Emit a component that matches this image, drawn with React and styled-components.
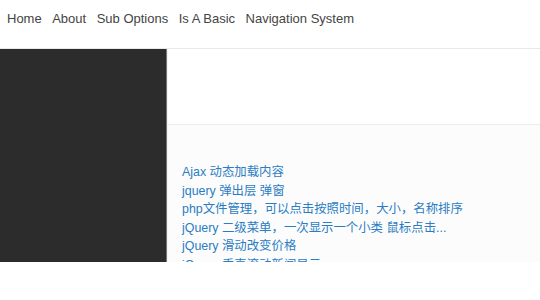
import React from "react";
import styled, { createGlobalStyle } from "styled-components";

const Global = createGlobalStyle`
  html, body { margin: 0; padding: 0; background: #fff; }
  body { font-family: "Liberation Sans", Arial, "Noto Sans CJK SC", sans-serif; }
`;

const Nav = styled.ul`
  box-sizing: border-box;
  list-style: none;
  margin: 0;
  padding: 0 0 11px 7px;
  height: 49px;
  display: flex;
  align-items: center;
  gap: 10.5px;
  border-bottom: 1px solid #e9e9e9;
`;

const NavItem = styled.li`
  font-size: 13px;
  color: #444;
  line-height: 16px;
`;

const Main = styled.div`
  display: flex;
  height: 213px;
  overflow: hidden;
`;

const Sidebar = styled.aside`
  width: 166px;
  flex: none;
  background: #2c2c2c;
  border-right: 1px solid #777;
`;

const Content = styled.section`
  flex: 1;
  display: flex;
  flex-direction: column;
  border-left: 1px solid #f3f3f3;
`;

const Header = styled.div`
  height: 75px;
  flex: none;
  background: #fff;
  border-bottom: 1px solid #ececec;
`;

const List = styled.ul`
  flex: 1;
  list-style: none;
  margin: 0;
  padding: 38px 0 0 14px;
  background: #fcfcfc;
`;

const LinkItem = styled.li`
  font-size: 12.4px;
  line-height: 18.6px;
  white-space: nowrap;
`;

const A = styled.a`
  color: #2a7dc4;
  text-decoration: none;
`;

const navItems = ["Home", "About", "Sub Options", "Is A Basic", "Navigation System"];
const links = [
  "Ajax 动态加载内容",
  "jquery 弹出层 弹窗",
  "php文件管理，可以点击按照时间，大小，名称排序",
  "jQuery 二级菜单，一次显示一个小类 鼠标点击...",
  "jQuery 滑动改变价格",
  "jQuery 垂直滚动新闻显示",
];

export default function App() {
  return (
    <>
      <Global />
      <Nav>
        {navItems.map((t) => (
          <NavItem key={t}>{t}</NavItem>
        ))}
      </Nav>
      <Main>
        <Sidebar />
        <Content>
          <Header />
          <List>
            {links.map((t) => (
              <LinkItem key={t}>
                <A href="#">{t}</A>
              </LinkItem>
            ))}
          </List>
        </Content>
      </Main>
    </>
  );
}
